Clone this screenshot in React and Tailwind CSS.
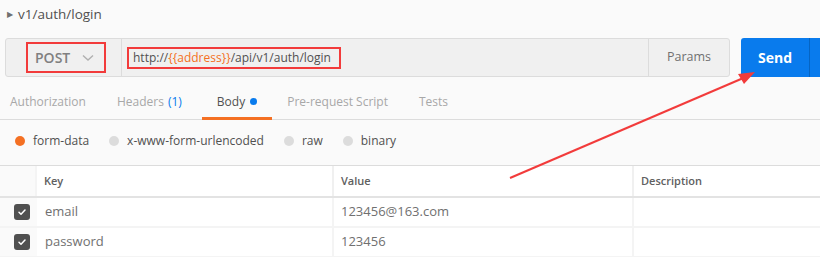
import React from 'react';

const tabs = [
  { label: 'Authorization', gap: 'mr-[31px]' },
  { label: 'Headers', count: '(1)', gap: 'mr-[20px]' },
  { label: 'Body', active: true, gap: 'mr-[15px]' },
  { label: 'Pre-request Script', gap: 'mr-[31px]' },
  { label: 'Tests', gap: 'mr-[31px]' }
];

const bodyTypes = ['form-data', 'x-www-form-urlencoded', 'raw', 'binary'];

const rows = [
  { key: 'email', value: '123456@163.com' },
  { key: 'password', value: '123456' }
];

function Check() {
  return (
    <span className="flex h-4 w-4 items-center justify-center rounded-[3px] bg-[#505050]">
      <svg width="10" height="10" viewBox="0 0 10 10" fill="none">
        <path d="M2 5.2l2 2L8 3" stroke="#fff" strokeWidth="1.5" strokeLinecap="round" strokeLinejoin="round" />
      </svg>
    </span>
  );
}

export default function App() {
  return (
    <div className="relative h-[257px] w-[820px] overflow-hidden bg-[#fafafa] font-['Open_Sans',sans-serif] text-[#505050]">
      {/* Title */}
      <div className="flex h-[28px] items-center pl-[7px]">
        <span className="mr-[5px] text-[8px] text-[#707070]">▶</span>
        <span className="text-[13.5px] text-[#505050]">v1/auth/login</span>
      </div>

      {/* Request bar */}
      <div className="mt-[10px] flex h-[39px] pl-[5px]">
        <div className="flex w-[725px] rounded-[3px] border border-[#dcdcdc] bg-[#f0f0f0]">
          <div className="flex w-[116px] items-center border-r border-[#dcdcdc] pl-[20px]">
            <div className="flex h-[31px] w-[80px] items-center gap-[12px] border-2 border-[#f23b3b] pl-[7px]">
              <span className="text-[14px] font-semibold text-[#808080]">POST</span>
              <svg width="12" height="8" viewBox="0 0 12 8" fill="none">
                <path d="M1 1.5l5 4.5 5-4.5" stroke="#b0b0b0" strokeWidth="1.4" />
              </svg>
            </div>
          </div>
          <div className="flex flex-1 items-center pl-[5px]">
            <div className="flex h-[22px] items-center border-2 border-[#f23b3b] pl-[4px] pr-[8px] text-[12px]">
              <span className="text-[#505050]">http://</span>
              <span className="text-[#f47023]">{'{{address}}'}</span>
              <span className="text-[#505050]">/api/v1/auth/login</span>
            </div>
          </div>
          <div className="flex w-[81px] items-center justify-center border-l border-[#dcdcdc] text-[12.5px] text-[#707070]">
            Params
          </div>
        </div>
        <div className="ml-[11px] flex flex-1 rounded-tl-[3px] bg-[#097bed]">
          <div className="flex w-[69px] items-center justify-center border-r border-[#0565c4] text-[14px] font-bold text-white">
            Send
          </div>
        </div>
      </div>

      {/* Tabs */}
      <div className="mt-[3px] flex h-[40px] border-b border-[#dcdcdc] pl-[10px] pt-[4px]">
        {tabs.map((t) => (
          <div
            key={t.label}
            className={`relative flex items-center text-[12px] ${t.gap} ${t.active ? 'px-[15px] text-[#505050]' : 'text-[#a8a8a8]'}`}
          >
            {t.label}
            {t.count && <span className="ml-[4px] text-[#097bed]">{t.count}</span>}
            {t.active && <span className="ml-[5px] h-[7px] w-[7px] rounded-full bg-[#097bed]" />}
            {t.active && <span className="absolute -bottom-px left-0 right-0 h-[3px] bg-[#f47023]" />}
          </div>
        ))}
      </div>

      {/* Body type radios */}
      <div className="flex h-[46px] items-center border-b border-[#dcdcdc] pb-[4px] pl-[15px] text-[12px] text-[#505050]">
        {bodyTypes.map((b, i) => (
          <label key={b} className="mr-[20px] flex items-center gap-[8px]">
            <span className={`h-[10px] w-[10px] rounded-full ${i === 0 ? 'bg-[#f47023]' : 'bg-[#dcdcdc]'}`} />
            {b}
          </label>
        ))}
      </div>

      {/* Table */}
      <div className="text-[13px]">
        <div className="flex h-[32px] border-b-2 border-[#e3e3e3] text-[11px] font-semibold text-[#606060]">
          <div className="w-[37px] border-r-2 border-[#f4f4f4]" />
          <div className="flex w-[297px] items-center border-r-2 border-[#f0f0f0] bg-white pl-[7px]">Key</div>
          <div className="flex w-[300px] items-center border-r-2 border-[#f0f0f0] bg-white pl-[7px]">Value</div>
          <div className="flex flex-1 items-center bg-white pl-[7px]">Description</div>
        </div>
        {rows.map((r) => (
          <div key={r.key} className="flex h-[30px] border-b-2 border-[#f4f4f4]">
            <div className="flex w-[37px] items-center justify-center pl-[10px] pr-[4px]">
              <Check />
            </div>
            <div className="flex w-[297px] items-center border-r-2 border-[#f4f4f4] bg-white pl-[8px] text-[#707070]">{r.key}</div>
            <div className="flex w-[300px] items-center border-r-2 border-[#f4f4f4] bg-white pl-[7px] text-[#707070]">{r.value}</div>
            <div className="flex-1 bg-white" />
          </div>
        ))}
      </div>

      {/* Annotation arrow */}
      <svg className="pointer-events-none absolute left-0 top-0" width="820" height="257">
        <line x1="510" y1="178" x2="748" y2="76" stroke="#f23b3b" strokeWidth="2" />
        <path d="M755 72 L738 74 L744 84 Z" fill="#f23b3b" />
      </svg>
    </div>
  );
}
